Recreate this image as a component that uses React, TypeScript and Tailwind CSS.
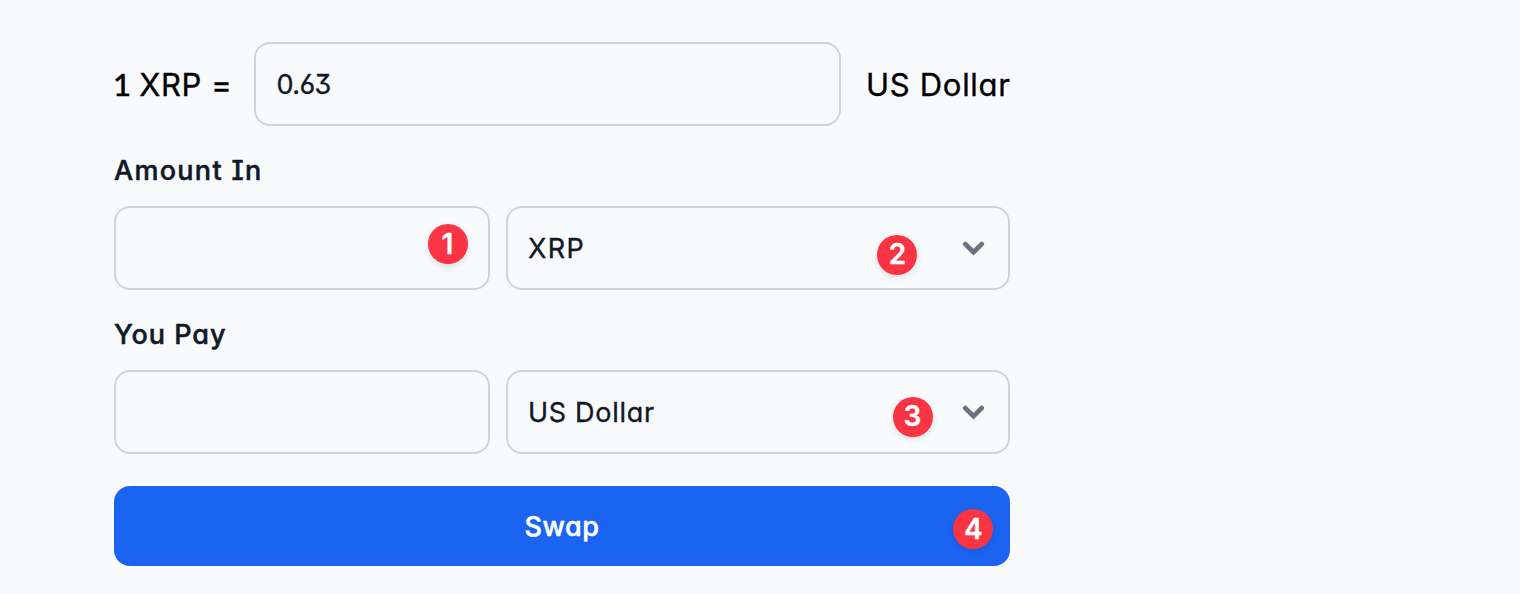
import type { ReactNode } from 'react';

const textFont = "font-['Inter',sans-serif] [font-feature-settings:'cv11','cv08','cv09','cv03']";
const fieldBox = 'h-[84px] rounded-2xl border-2 border-[#d1d3dc] bg-[#f9fafc]';
const regular = 'font-normal [-webkit-text-stroke:0.35px_currentColor]';
const medium = 'font-medium [-webkit-text-stroke:0.5px_currentColor]';

function Badge({ n, place }: { n: number; place: string }) {
  return (
    <span
      className={`absolute flex h-10 w-10 items-center justify-center rounded-full bg-[#fa3442] pb-px font-['Inter',sans-serif] text-[28px] leading-none font-semibold tracking-normal text-white shadow-[0_2px_6px_rgba(0,0,0,0.12)] [-webkit-text-stroke:0.3px_white] [font-feature-settings:normal] ${place}`}
    >
      {n}
    </span>
  );
}

function Chevron() {
  return (
    <svg className="mr-[22px] h-4 w-6" viewBox="0 0 24 16" fill="none">
      <path d="M3.2 4 11.5 12.2 19.8 4" stroke="#6b7280" strokeWidth="4.6" strokeLinecap="round" strokeLinejoin="miter" />
    </svg>
  );
}

function Row({ label, labelSpacing, currency, currencySpacing, amountBadge, selectBadge }: {
  label: string;
  labelSpacing: string;
  currency: string;
  currencySpacing: string;
  amountBadge?: ReactNode;
  selectBadge: ReactNode;
}) {
  return (
    <div className="mt-6">
      <label className={`block h-10 pt-px text-[27px] leading-10 ${medium} ${labelSpacing}`}>{label}</label>
      <div className="mt-4 flex gap-4">
        <div className={`relative w-[376px] ${fieldBox}`}>{amountBadge}</div>
        <div className={`relative flex flex-1 items-center justify-between pl-5 ${fieldBox}`}>
          <span className={`pt-0.5 text-[27px] ${regular} ${currencySpacing}`}>{currency}</span>
          <Chevron />
          {selectBadge}
        </div>
      </div>
    </div>
  );
}

export default function App() {
  return (
    <main className={`h-[594px] w-full overflow-hidden bg-[#f9fafc] pt-[42px] pl-[114px] text-[#111827] ${textFont}`}>
      <div className="w-[896px]">
        <div className="flex items-center text-black">
          <span className={`flex w-[140px] shrink-0 items-baseline pt-0.5 text-[31px] leading-10 tracking-[0.6px] whitespace-pre ${regular}`}>
            <span className="w-4 -indent-px font-['Lato'] text-[31px] leading-none tracking-normal [-webkit-text-stroke:0.6px_black]">1</span>
            <span> XRP =</span>
          </span>
          <div className={`flex w-[587px] shrink-0 items-center pt-0.5 pl-[20.5px] text-[27px] tracking-[-0.6px] text-[#111827] ${regular} ${fieldBox}`}>0.63</div>
          <span className={`ml-[25px] pt-0.5 text-[31px] tracking-[0.7px] whitespace-nowrap ${regular}`}>US Dollar</span>
        </div>
        <Row
          label="Amount In"
          labelSpacing="tracking-[1.3px]"
          currency="XRP"
          currencySpacing="tracking-[1.4px]"
          amountBadge={<Badge n={1} place="left-[311.5px] top-[16px]" />}
          selectBadge={<Badge n={2} place="left-[369.4px] top-[26.5px]" />}
        />
        <Row
          label="You Pay"
          labelSpacing="tracking-[1px]"
          currency="US Dollar"
          currencySpacing="tracking-[0.7px]"
          selectBadge={<Badge n={3} place="left-[384.5px] top-[24.5px]" />}
        />
        <button className={`relative mt-8 flex h-20 w-full items-center justify-center rounded-2xl bg-[#1b64f2] pt-0.5 text-[27px] tracking-[0.6px] text-white ${medium}`}>
          Swap
          <Badge n={4} place="left-[839.4px] top-[23px]" />
        </button>
      </div>
    </main>
  );
}
